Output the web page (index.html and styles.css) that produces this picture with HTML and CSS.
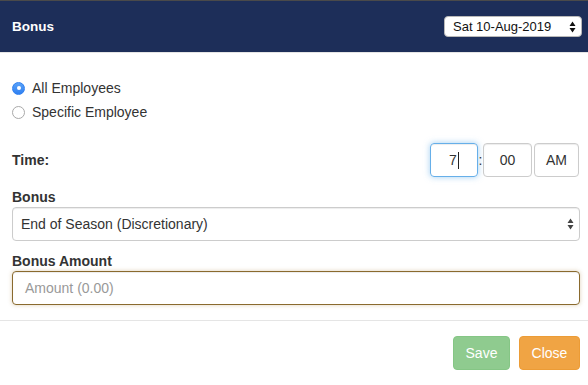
FILE: index.html
```html
<!DOCTYPE html>
<html>
<head>
<meta charset="utf-8">
<link rel="stylesheet" href="styles.css">
</head>
<body>
<div class="modal">
  <div class="modal-header">
    <div class="modal-title">Bonus</div>
    <div class="date-select">
      <span>Sat 10-Aug-2019</span>
      <svg class="arrows" width="7" height="12" viewBox="0 0 7 12"><path d="M3.5 0.5 L6.5 5 L0.5 5 Z M3.5 11.5 L6.5 7 L0.5 7 Z" fill="#111"/></svg>
    </div>
  </div>
  <div class="modal-body">
    <div class="radios">
      <div class="radio-row"><span class="radio checked"></span><span>All Employees</span></div>
      <div class="radio-row"><span class="radio"></span><span>Specific Employee</span></div>
    </div>
    <div class="time-row">
      <div class="label">Time:</div>
      <div class="time-fields">
        <div class="field hour focused"><span>7</span><span class="caret"></span></div>
        <span class="colon">:</span>
        <div class="field minute">00</div>
        <div class="field ampm">AM</div>
      </div>
    </div>
    <div class="label block">Bonus</div>
    <div class="select">
      <span>End of Season (Discretionary)</span>
      <svg class="arrows" width="7" height="12" viewBox="0 0 7 12"><path d="M3.5 0.5 L6.5 5 L0.5 5 Z M3.5 11.5 L6.5 7 L0.5 7 Z" fill="#444"/></svg>
    </div>
    <div class="label block">Bonus Amount</div>
    <div class="input amount"><span class="placeholder">Amount (0.00)</span></div>
  </div>
  <div class="modal-footer">
    <button class="btn btn-save">Save</button>
    <button class="btn btn-close">Close</button>
  </div>
</div>
</body>
</html>
```

FILE: styles.css
```css
* { box-sizing: border-box; }
html, body { margin: 0; padding: 0; background: #fff; }
body {
  font-family: "Liberation Sans", Arial, Helvetica, sans-serif;
  font-size: 14px;
  line-height: 20px;
  color: #333;
  width: 588px;
  height: 385px;
  overflow: hidden;
}
.modal { border-top: 1px solid #4a4a4a; }
.modal-header {
  height: 52px;
  background: #1d2e59;
  border-bottom: 1px solid #e5e5e5;
  display: flex;
  align-items: center;
  justify-content: space-between;
  padding: 0 6px 0 12px;
}
.modal-title {
  color: #fff;
  font-weight: bold;
  font-size: 13.5px;
}
.date-select {
  width: 138px;
  height: 21px;
  background: #fff;
  border: 1px solid #b9b9b9;
  border-radius: 4px;
  display: flex;
  align-items: center;
  justify-content: space-between;
  padding: 0 5px 0 8px;
  font-size: 13px;
  color: #111;
}
.modal-body { padding: 23px 8px 15px 12px; }
.radios { display: flex; flex-direction: column; }
.radio-row {
  display: flex;
  align-items: center;
  height: 24px;
  line-height: 24px;
  gap: 7px;
}
.radio {
  width: 13px;
  height: 13px;
  border-radius: 50%;
  border: 1px solid #a9a9a9;
  background: #fff;
  position: relative;
}
.radio.checked {
  border-color: #2f7ff0;
  background: linear-gradient(#5aa2f8, #2f80f2);
}
.radio.checked::after {
  content: "";
  position: absolute;
  left: 3.5px;
  top: 3.5px;
  width: 4px;
  height: 4px;
  border-radius: 50%;
  background: #fff;
}
.time-row {
  margin-top: 19px;
  display: flex;
  align-items: center;
  justify-content: space-between;
}
.label { font-weight: bold; }
.label.block { margin-top: 10px; }
.time-fields { display: flex; align-items: center; margin-right: 1px; }
.field {
  height: 34px;
  border: 1px solid #ccc;
  border-radius: 4px;
  display: flex;
  align-items: center;
  justify-content: center;
  color: #333;
  box-shadow: inset 0 1px 1px rgba(0,0,0,.075);
}
.hour { width: 48px; }
.minute { width: 49px; }
.ampm { width: 45px; margin-left: 2px; }
.focused {
  border-color: #66afe9;
  box-shadow: inset 0 1px 1px rgba(0,0,0,.075), 0 0 6px rgba(102,175,233,.6);
}
.caret {
  width: 1px;
  height: 17px;
  background: #222;
  margin-left: 1px;
}
.colon { width: 5px; text-align: center; color: #333; }
.select, .input {
  height: 34px;
  border: 1px solid #ccc;
  border-radius: 4px;
  display: flex;
  align-items: center;
  justify-content: space-between;
  padding: 0 5px 0 8px;
  box-shadow: inset 0 1px 1px rgba(0,0,0,.075);
}
.input { padding-left: 12px; }
.amount {
  border-color: #8a6a2e;
  box-shadow: inset 0 1px 1px rgba(0,0,0,.075), 0 0 4px rgba(160,120,50,.35);
}
.placeholder { color: #999; }
.modal-footer {
  border-top: 1px solid #e5e5e5;
  padding: 15px 8px 15px 12px;
  display: flex;
  justify-content: flex-end;
  gap: 9px;
}
.btn {
  font-family: inherit;
  font-size: 14px;
  line-height: 20px;
  height: 34px;
  padding: 6px 0;
  border-radius: 4px;
  border: 1px solid transparent;
  color: #fff;
  text-align: center;
}
.btn-save { width: 57px; background: #8fcb8f; border-color: #85c685; }
.btn-close { width: 61px; background: #f0a444; border-color: #ec9c36; }
```
